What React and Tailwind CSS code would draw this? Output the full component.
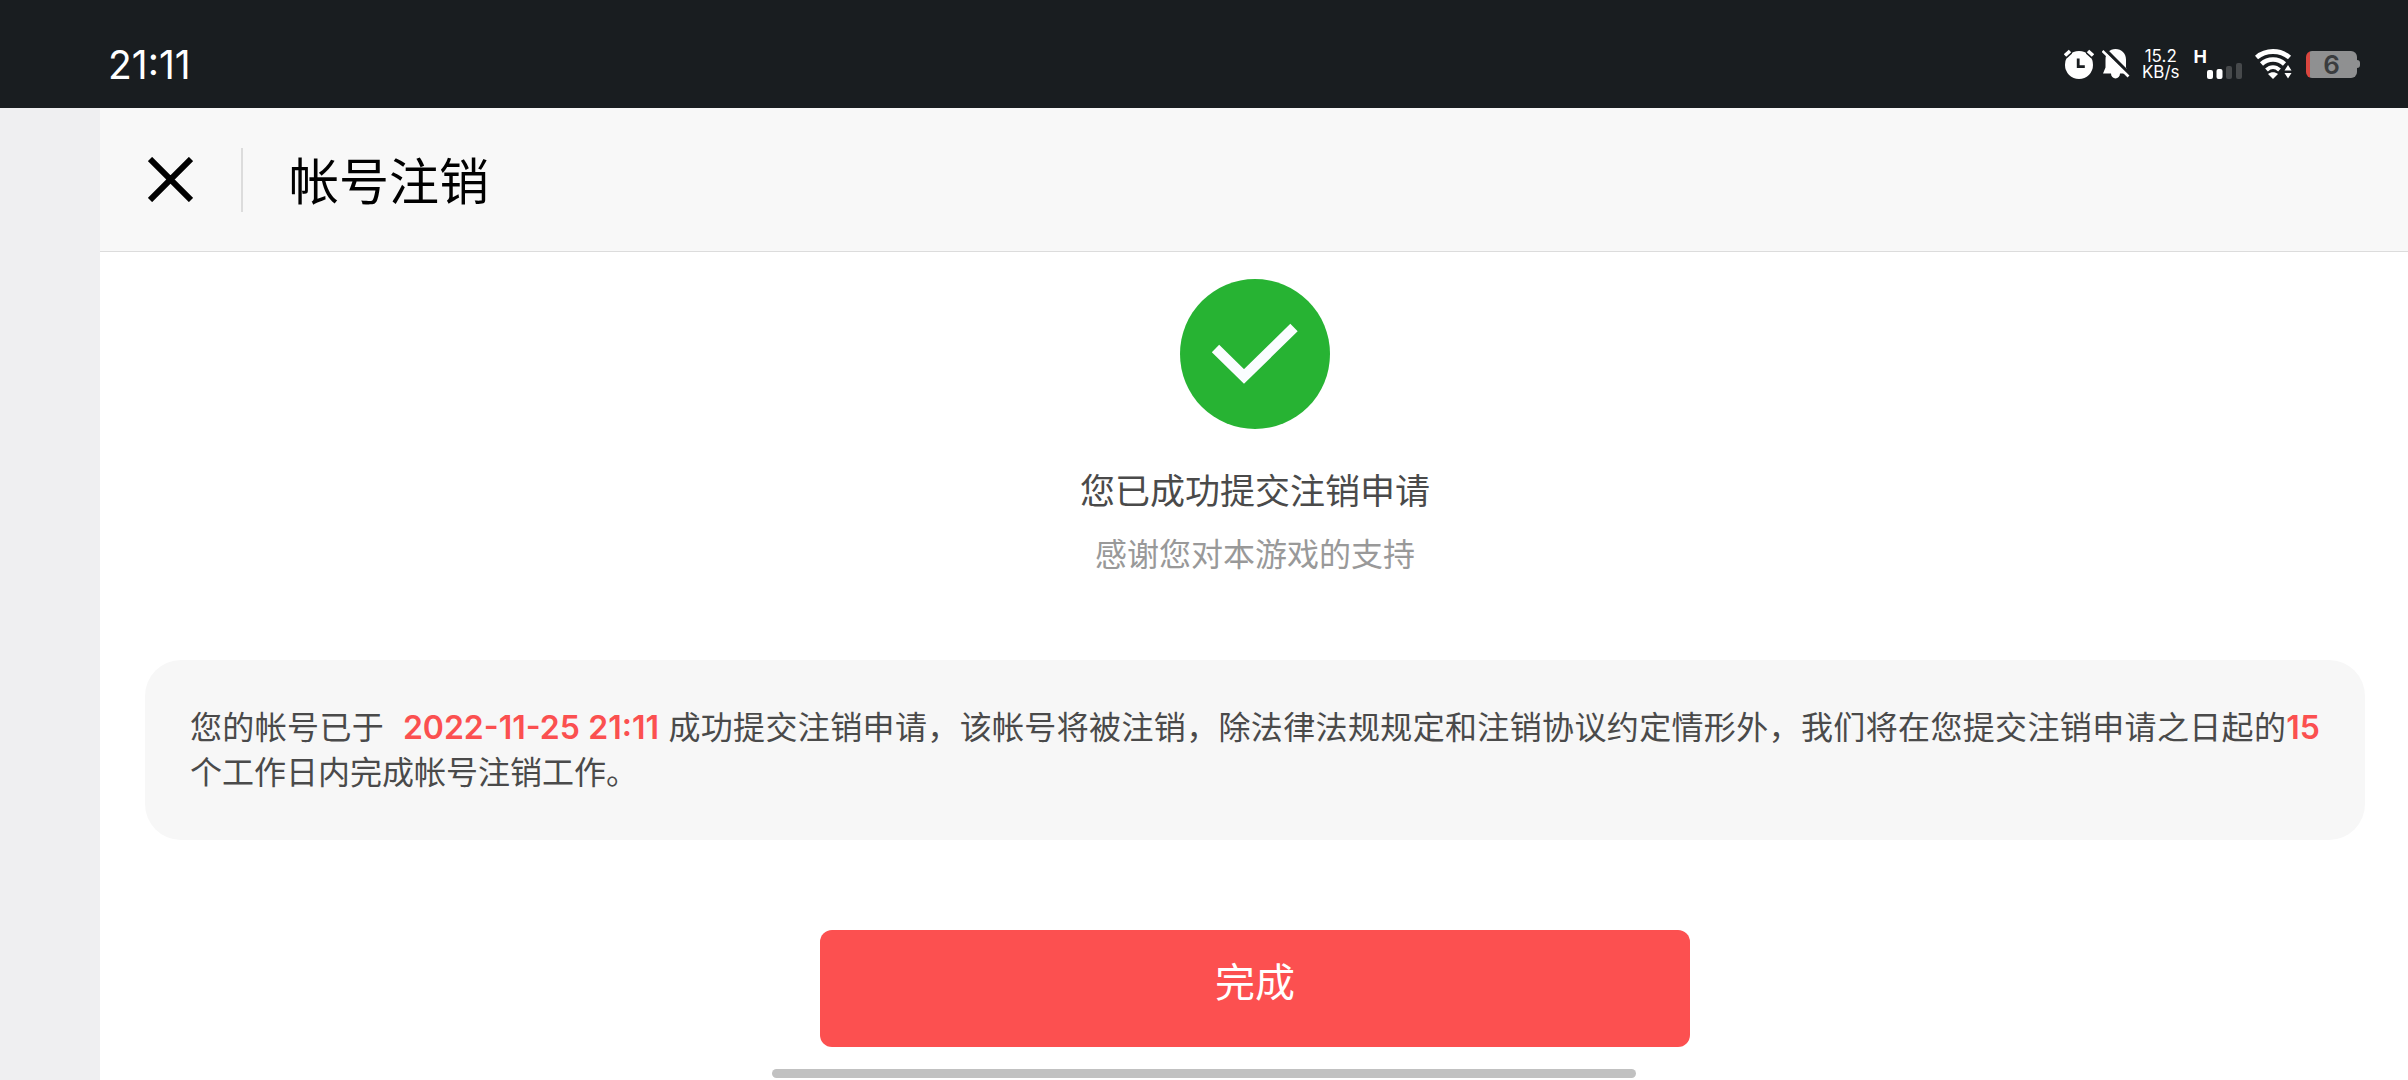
const INTER = "font-['Inter','Noto_Sans_CJK_SC',sans-serif]";

const AlarmIcon = () => (
  <svg className="h-[30px] w-[30px]" viewBox="0 0 30 30" fill="none" aria-hidden="true">
    <circle cx="15" cy="16" r="14" fill="#fff" />
    <path d="M1 6.5 6 2M24 2l5 4.5" stroke="#191d20" strokeWidth="6.5" />
    <path d="M1 6.5 6 2M24 2l5 4.5" stroke="#fff" strokeWidth="3.6" />
    <path d="M14.2 9.5v8.2h6.6" stroke="#191d20" strokeWidth="2.8" />
  </svg>
);

const BellOffIcon = () => (
  <svg className="h-[30px] w-[28px]" viewBox="0 0 28 30" fill="none" aria-hidden="true">
    <path
      d="M13.5 0C19.5 0 24 4.5 24 10.5V18.5L26.5 24.5H18A4.5 5 0 0 1 9 24.5H1L3.5 18.5V10.5C3.5 4.5 7.5 0 13.5 0Z"
      fill="#fff"
    />
    <path d="M3 0.5 28 25.5" stroke="#191d20" strokeWidth="3.6" />
    <path d="M0.5 2 26.5 27.5" stroke="#fff" strokeWidth="2.6" />
  </svg>
);

const SignalIcon = () => (
  <svg className="h-[16px] w-[36px]" viewBox="0 0 36 16" aria-hidden="true">
    <rect x="0" y="7" width="6" height="9" rx="2" fill="#fff" />
    <rect x="9.5" y="6" width="6" height="10" rx="2" fill="#fff" />
    <rect x="19" y="3" width="6" height="13" rx="2" fill="#46494b" />
    <rect x="29" y="0" width="6" height="16" rx="2" fill="#46494b" />
  </svg>
);

const WifiIcon = () => (
  <svg className="h-[30px] w-[37px]" viewBox="0 0 37 30" fill="none" aria-hidden="true">
    <path d="M1.5 8.5C11 0.5 25 0.5 34.5 8.5" stroke="#fff" strokeWidth="4.8" />
    <path d="M6.5 15C13 9 23 9 29.5 15" stroke="#fff" strokeWidth="4.6" />
    <path d="M11.5 21C15.5 17.2 20.5 17.2 24.5 21" stroke="#fff" strokeWidth="4" />
    <path d="M18 30 13 25C16 22.6 20 22.6 23 25Z" fill="#fff" />
    <path
      d="M33 16 36.5 21.5H29.5ZM33 29.5 29.5 24H36.5Z"
      fill="#fff"
      stroke="#191d20"
      strokeWidth="2"
      paintOrder="stroke"
    />
  </svg>
);

const Battery = () => (
  <div className="flex items-center">
    <div className="flex h-[27px] w-[51px] items-center justify-center rounded-md bg-linear-to-r from-[#d9463f] from-8% to-[#8f9091] to-8% text-[26px] leading-[27px] font-semibold text-[#3a3c3e]">
      6
    </div>
    <div className="h-2 w-[3px] rounded-r bg-[#8f9091]" />
  </div>
);

const StatusBar = () => (
  <div className="flex h-[108px] items-center justify-between bg-[#191d20] pt-5 pr-12 pl-[108px] text-white">
    <time className="text-[39px] leading-none">21:11</time>
    <div className="flex items-center">
      <AlarmIcon />
      <div className="ml-2">
        <BellOffIcon />
      </div>
      <div className="ml-3 text-center text-[17px] leading-4">
        <div>15.2</div>
        <div>KB/s</div>
      </div>
      <div className="ml-[14px] flex h-[30px]">
        <span className="text-[18px] leading-4 font-bold">H</span>
        <div className="self-end">
          <SignalIcon />
        </div>
      </div>
      <div className="mr-[14px] ml-3">
        <WifiIcon />
      </div>
      <Battery />
    </div>
  </div>
);

const Header = () => (
  <header className="flex h-36 items-center border-b border-[#dcdcdc] bg-[#f8f8f8] pl-12">
    <button type="button" aria-label="关闭" className="cursor-pointer">
      <svg className="h-[45px] w-[45px]" viewBox="0 0 45 45" aria-hidden="true">
        <path d="M2 2 43 43M43 2 2 43" stroke="#000" strokeWidth="6" />
      </svg>
    </button>
    <div className="ml-12 h-16 w-[2px] bg-[#dcdcdc]" />
    <h1 className="ml-[46px] pt-1 text-[50px] leading-none text-black">
      帐号注销
    </h1>
  </header>
);

const SuccessIcon = () => (
  <svg className="h-[150px] w-[150px]" viewBox="0 0 150 150" fill="none" aria-hidden="true">
    <circle cx="75" cy="75" r="75" fill="#27b333" />
    <path d="M35.5 69.5 64 97.5 114 48.5" stroke="#fafdff" strokeWidth="10.5" />
  </svg>
);

const App = () => {
  return (
    <div className={`flex min-h-screen flex-col bg-white ${INTER}`} lang="zh-CN">
      <StatusBar />

      <div className="flex flex-1">
        <aside className="w-[100px] shrink-0 bg-[#efeff1]" />

        <div className="flex min-w-0 flex-1 flex-col">
          <Header />

          <main className="flex flex-col items-center pt-[27px] pr-[43px] pl-[45px]">
            <SuccessIcon />
            <h2 className="mt-10 text-[35px] leading-[45px] text-[#4a4a4a]">
              您已成功提交注销申请
            </h2>
            <p className="mt-[18px] text-[32px] leading-[45px] text-[#999]">
              感谢您对本游戏的支持
            </p>

            {/* Submission details */}
            <div className="mt-[83px] w-full rounded-[36px] bg-[#f7f7f7] p-[45px]">
              <p className="text-justify text-[32px] leading-[45px] text-[#4a4a4a]">
                您的帐号已于&nbsp;{" "}
                <strong className="font-semibold text-[#fb5050]">
                  2022-11-25 21:11
                </strong>{" "}
                成功提交注销申请，该帐号将被注销，除法律法规规定和注销协议约定情形外，我们将在您提交注销申请之日起的
                <strong className="font-semibold text-[#fb5050]">15</strong>
                个工作日内完成帐号注销工作。
              </p>
            </div>

            <button
              type="button"
              className="mt-[90px] h-[117px] w-full max-w-[870px] cursor-pointer rounded-xl bg-[#fc5050] pb-3 text-[40px] text-white"
            >
              完成
            </button>
          </main>
        </div>
      </div>

      {/* Home gesture bar */}
      <div className="fixed inset-x-0 bottom-[2px] mx-auto h-[9px] w-[864px] rounded-full bg-[#c1c1c1]" />
    </div>
  );
};

export default App;
